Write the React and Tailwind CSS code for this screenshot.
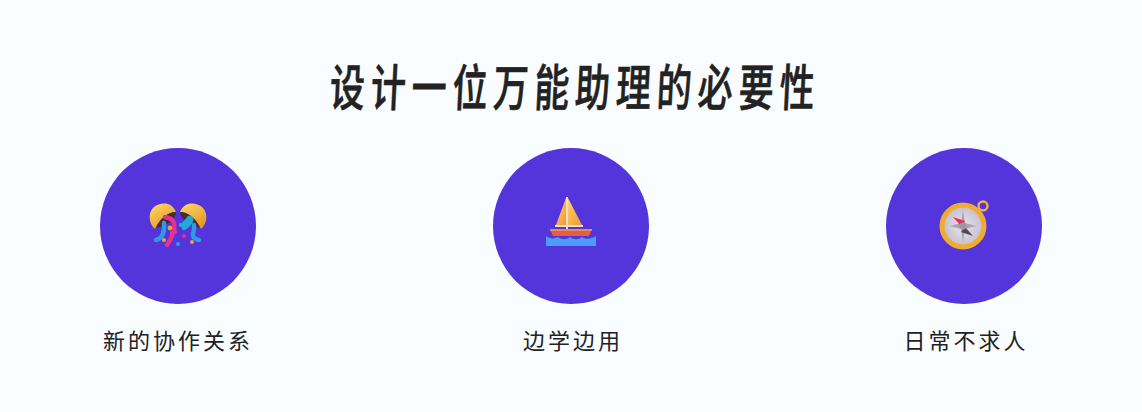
const cjk = "font-['Noto_Sans_CJK_SC',sans-serif]";

function Poppers() {
  return (
    <svg width="76" height="72" viewBox="0 0 76 72" className="blur-[0.4px]">
      <defs>
        <linearGradient id="shell" x1="0" y1="0" x2="0.6" y2="1">
          <stop offset="0" stopColor="#ffdc66" />
          <stop offset="1" stopColor="#e39a26" />
        </linearGradient>
      </defs>
      <path d="M15 39C8 33 8 22 14 17C20 12 32 11 36 22C30 22 20 28 15 39z" fill="url(#shell)" />
      <path d="M61 39C68 33 68 22 62 17C56 12 44 11 40 22C46 22 56 28 61 39z" fill="url(#shell)" />
      <path d="M16 38C20 28 28 22 36 22C36 29 27 36 16 38z" fill="#4a2b30" />
      <path d="M60 38C56 28 48 22 40 22C40 29 49 36 60 38z" fill="#4a2b30" />
      <g fill="none" strokeLinecap="round" strokeWidth="4.4">
        <path d="M25 27c5 1 8 2 9 6s-1 5 1 9" stroke="#e8308f" />
        <path d="M16 50c6-1 9-8 8-17" stroke="#2e9be6" />
        <path d="M41 35c3 1 5-4 8-7 2-1 3 1 2 3s-4 5-7 7" stroke="#23a8d8" />
        <path d="M54 35c1 6-2 8-1 11s3 3 6 4" stroke="#2e9be6" />
        <path d="M32 43c1 5-3 8-5 12" stroke="#e8308f" />
      </g>
      <circle cx="30" cy="38" r="2.4" fill="#f0a038" />
      <circle cx="24" cy="50" r="2" fill="#f0a038" />
      <circle cx="44" cy="46" r="2" fill="#e8308f" />
      <circle cx="38" cy="54" r="2" fill="#2e9be6" />
      <circle cx="52" cy="52" r="2" fill="#f0a038" />
    </svg>
  );
}

function Boat() {
  return (
    <svg width="72" height="72" viewBox="0 0 72 72" className="blur-[0.4px]">
      <defs>
        <linearGradient id="sail" x1="0" y1="0" x2="0.8" y2="1">
          <stop offset="0" stopColor="#ffd86a" />
          <stop offset="1" stopColor="#f59a3c" />
        </linearGradient>
      </defs>
      <path d="M31 8v27H21z" fill="url(#sail)" />
      <path d="M33 8l14 27H33z" fill="url(#sail)" />
      <rect x="31" y="7" width="2" height="32" fill="#f3dcc0" />
      <rect x="20" y="35" width="28" height="2" fill="#f6e0c4" />
      <path d="M15 39h42l-3 7H18z" fill="#e3603f" />
      <rect x="15" y="39" width="42" height="2" fill="#f08a4c" />
      <path d="M11 46c4 3 8 3 12 1 4 3 8 3 12 0 4 3 8 3 12 0 4 3 9 2 14-1v10H11z" fill="#4f9cf7" />
    </svg>
  );
}

function Compass() {
  return (
    <svg width="68" height="72" viewBox="0 0 68 72" className="blur-[0.4px]">
      <defs>
        <radialGradient id="face" cx="0.5" cy="0.5" r="0.6">
          <stop offset="0" stopColor="#e8e4ea" />
          <stop offset="1" stopColor="#bdb6c6" />
        </radialGradient>
      </defs>
      <circle cx="53" cy="16" r="4.5" fill="none" stroke="#f0b23a" strokeWidth="2.4" />
      <circle cx="33" cy="36" r="21" fill="url(#face)" stroke="#f0ac2e" strokeWidth="5" />
      <path d="M33 20l2 13 11 3-11 3-2 13-2-13-11-3 11-3z" fill="#a9a3b2" />
      <path d="M23 27l12 4-4 5z" fill="#e8305f" />
      <path d="M43 46l-12-4 4-5z" fill="#4f4a58" />
      <circle cx="33" cy="36" r="3.5" fill="#9c97a4" />
    </svg>
  );
}

function Feature({ icon, label, className = "" }) {
  return (
    <div className="flex w-[156px] flex-col items-center">
      <div className="flex h-[156px] w-[156px] items-center justify-center rounded-full bg-[#5335db]">
        {icon}
      </div>
      <div className={`mt-[19px] whitespace-nowrap text-[22px] leading-[32px] tracking-[3px] text-[#222222] ${cjk} ${className}`}>
        {label}
      </div>
    </div>
  );
}

export default function App() {
  return (
    <div className="flex h-[412px] w-[1142px] flex-col items-center overflow-hidden bg-[#f9fdff]">
      <h1 className={`mt-[46px] mb-[4px] h-[98px] -skew-x-[4deg] scale-x-[0.7] whitespace-nowrap pl-[10px] text-[50px] font-medium leading-[76px] tracking-[8.4px] text-[#222222] [-webkit-text-stroke:0.6px_#222222] ${cjk}`}>
        设计一位万能助理的必要性
      </h1>
      <div className="flex w-full justify-between px-[100px]">
        <Feature icon={<Poppers />} label="新的协作关系" />
        <Feature icon={<Boat />} label="边学边用" className="pl-[4px]" />
        <Feature icon={<Compass />} label="日常不求人" className="pl-[4px]" />
      </div>
    </div>
  );
}
